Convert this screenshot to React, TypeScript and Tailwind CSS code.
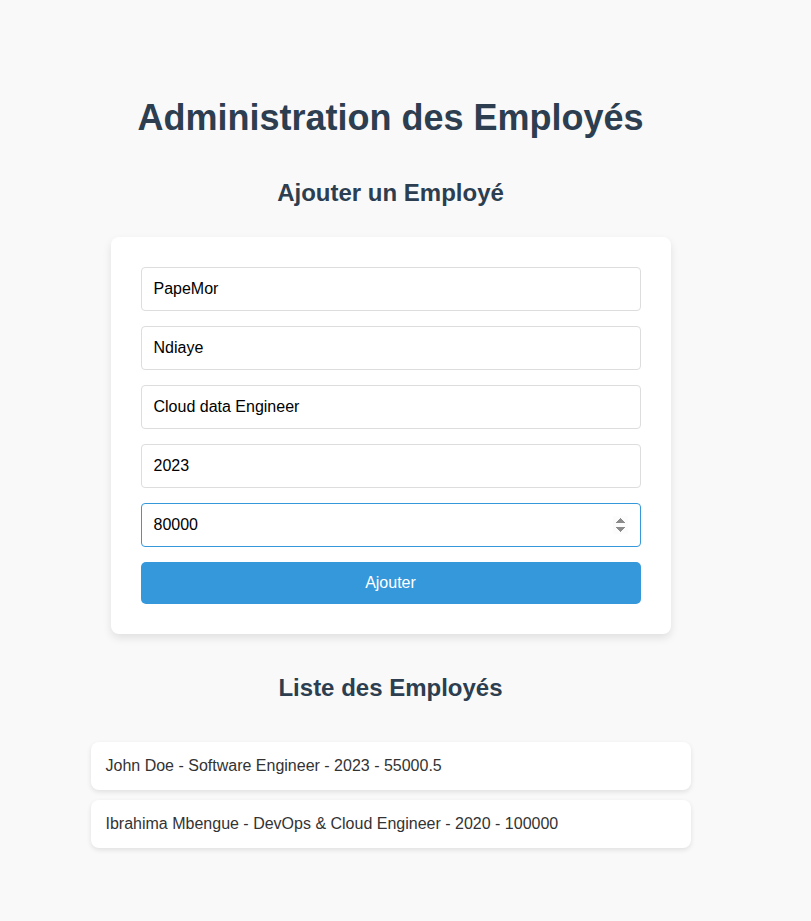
import React, { useEffect, useRef, useState } from 'react';

interface Employee {
  prenom: string;
  nom: string;
  poste: string;
  annee: number;
  salaire: number;
}

const employees: Employee[] = [
  { prenom: 'John', nom: 'Doe', poste: 'Software Engineer', annee: 2023, salaire: 55000.5 },
  { prenom: 'Ibrahima', nom: 'Mbengue', poste: 'DevOps & Cloud Engineer', annee: 2020, salaire: 100000 },
];

const baseInput =
  'block w-full rounded-[4px] border bg-white px-3 py-3 text-base leading-[18px] text-black outline-none';
const inputClass = baseInput + ' border-[#dddddd]';
const focusedClass = baseInput + ' border-[#3498db]';

export default function App() {
  const [form, setForm] = useState({
    prenom: 'PapeMor',
    nom: 'Ndiaye',
    poste: 'Cloud data Engineer',
    annee: '2023',
    salaire: '80000',
  });
  const salaireRef = useRef<HTMLInputElement>(null);

  useEffect(() => {
    salaireRef.current?.focus();
  }, []);

  const set = (k: keyof typeof form) => (e: React.ChangeEvent<HTMLInputElement>) =>
    setForm({ ...form, [k]: e.target.value });

  return (
    <div className="min-h-[921px] w-full bg-[#f9f9f9] font-['Liberation_Sans',Arial,sans-serif]">
      <div className="flex w-[781px] flex-col items-center pt-[97px]">
        <h1 className="text-[36px] font-bold leading-[41px] text-[#2c3e50]">Administration des Employés</h1>

        <h2 className="mt-[41px] text-[24px] font-bold leading-[28px] text-[#2c3e50]">Ajouter un Employé</h2>

        {/* Formulaire */}
        <form
          className="mt-[30px] flex w-[560px] flex-col gap-[15px] rounded-lg bg-white p-[30px] shadow-[0_4px_8px_rgba(0,0,0,0.1)]"
          onSubmit={(e) => e.preventDefault()}
        >
          <input className={inputClass} value={form.prenom} onChange={set('prenom')} placeholder="Prénom" />
          <input className={inputClass} value={form.nom} onChange={set('nom')} placeholder="Nom" />
          <input className={inputClass} value={form.poste} onChange={set('poste')} placeholder="Poste" />
          <input className={inputClass} value={form.annee} onChange={set('annee')} placeholder="Année" />
          <input
            ref={salaireRef}
            type="number"
            className={focusedClass}
            value={form.salaire}
            onChange={set('salaire')}
            placeholder="Salaire"
          />
          <button
            type="submit"
            className="w-full rounded-[5px] bg-[#3498db] py-3 text-base leading-[18px] text-white"
          >
            Ajouter
          </button>
        </form>

        <h2 className="mt-[40px] text-[24px] font-bold leading-[28px] text-[#2c3e50]">Liste des Employés</h2>

        <ul className="mt-[40px] flex w-[600px] flex-col gap-[10px]">
          {employees.map((emp) => (
            <li
              key={emp.nom}
              className="rounded-lg bg-white p-[15px] text-base leading-[18px] text-[#333333] shadow-[0_2px_5px_rgba(0,0,0,0.1)]"
            >
              {emp.prenom} {emp.nom} - {emp.poste} - {emp.annee} - {emp.salaire}
            </li>
          ))}
        </ul>
      </div>
    </div>
  );
}
